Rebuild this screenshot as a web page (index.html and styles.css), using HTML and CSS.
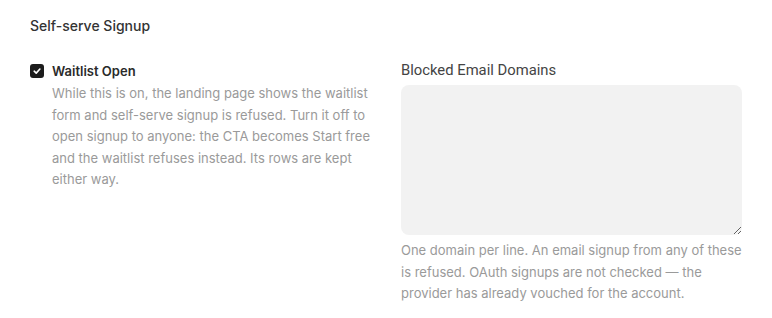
FILE: index.html
```html
<!DOCTYPE html>
<html>
<head>
<meta charset="utf-8">
<link rel="stylesheet" href="styles.css">
</head>
<body>
<section class="panel">
  <h2 class="title">Self-serve Signup</h2>
  <div class="grid">
    <div class="col">
      <label class="check">
        <span class="box"><svg width="10" height="10" viewBox="0 0 10 10"><path d="M2.2 5.2 L4.2 7.1 L7.9 3" fill="none" stroke="#fff" stroke-width="1.6" stroke-linecap="round" stroke-linejoin="round"/></svg></span>
        <span class="check-label">Waitlist Open</span>
      </label>
      <p class="help indent">While this is on, the landing page shows the waitlist form and self-serve signup is refused. Turn it off to open signup to anyone: the CTA becomes Start free and the waitlist refuses instead. Its rows are kept either way.</p>
    </div>
    <div class="col">
      <label class="field-label" for="domains">Blocked Email Domains</label>
      <textarea id="domains" class="textarea"></textarea>
      <p class="help after">One domain per line. An email signup from any of these is refused. OAuth signups are not checked — the provider has already vouched for the account.</p>
    </div>
  </div>
</section>
</body>
</html>
```
FILE: styles.css
```css
* { box-sizing: border-box; }
body {
  margin: 0;
  background: #fff;
  font-family: Inter, "Noto Sans", sans-serif;
  color: #2b2b2b;
}
.panel {
  padding: 16px 30px 0 30px;
}
.title {
  margin: 0;
  font-size: 14px;
  font-weight: 500;
  color: #333;
  line-height: 20px;
}
.grid {
  display: grid;
  grid-template-columns: 341px 341px;
  column-gap: 30px;
  margin-top: 25px;
}
.check {
  display: flex;
  align-items: center;
  gap: 8px;
  height: 20px;
}
.box {
  width: 14px;
  height: 14px;
  border-radius: 3px;
  background: #1c1c1c;
  display: flex;
  align-items: center;
  justify-content: center;
}
.check-label {
  font-size: 13px;
  font-weight: 600;
  color: #2a2a2a;
}
.help {
  margin: 0;
  font-size: 13px;
  line-height: 21.6px;
  color: #9a9a9a;
}
.indent {
  padding-left: 22px;
  margin-top: 2px;
}
.field-label {
  display: block;
  font-family: Roboto, "Noto Sans", sans-serif;
  font-size: 14.8px;
  color: #444;
  line-height: 20px;
  margin-top: -1px;
}
.textarea {
  display: block;
  width: 341px;
  height: 150px;
  margin-top: 5px;
  border: none;
  border-radius: 8px;
  background: #f2f2f2;
  resize: vertical;
}
.after {
  margin-top: 5px;
}
```
